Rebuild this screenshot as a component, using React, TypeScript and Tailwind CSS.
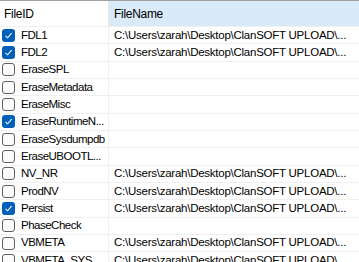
import React from 'react'

const PATH = 'C:\\Users\\zarah\\Desktop\\ClanSOFT UPLOAD\\...'

const rows = [
  { id: 'FDL1', checked: true, file: PATH },
  { id: 'FDL2', checked: true, file: PATH },
  { id: 'EraseSPL', checked: false, file: '' },
  { id: 'EraseMetadata', checked: false, file: '' },
  { id: 'EraseMisc', checked: false, file: '' },
  { id: 'EraseRuntimeN...', checked: true, file: '' },
  { id: 'EraseSysdumpdb', checked: false, file: '' },
  { id: 'EraseUBOOTL...', checked: false, file: '' },
  { id: 'NV_NR', checked: false, file: PATH },
  { id: 'ProdNV', checked: false, file: PATH },
  { id: 'Persist', checked: true, file: PATH },
  { id: 'PhaseCheck', checked: false, file: '' },
  { id: 'VBMETA', checked: false, file: PATH },
  { id: 'VBMETA_SYS...', checked: false, file: PATH },
]

function CheckBox({ checked }: { checked: boolean }) {
  if (checked) {
    return (
      <div className="w-[13px] h-[13px] rounded-[3px] bg-[#005fb8] flex items-center justify-center shrink-0">
        <svg width="9" height="9" viewBox="0 0 9 9" fill="none">
          <path d="M1.5 4.8 L3.6 6.8 L7.6 2.2" stroke="white" strokeWidth="1.1" />
        </svg>
      </div>
    )
  }
  return <div className="w-[13px] h-[13px] rounded-[3px] border border-[#5f5f5f] bg-[#fbfbfb] shrink-0" />
}

export default function App() {
  return (
    <div
      className="w-[359px] h-[262px] overflow-hidden bg-white border-t border-[#a0a0a0] text-black"
      style={{ fontFamily: '"Liberation Sans", Arial, sans-serif' }}
    >
      <div className="flex h-[26px] border-b border-[#f0f0f0]">
        <div className="w-[109px] shrink-0 border-r border-[#e5e5e5] flex items-center pl-[4px] text-[12px] tracking-[-0.3px]">
          FileID
        </div>
        <div className="flex-1 bg-[#d9ebf9] flex items-center pl-[5px] text-[12px] tracking-[-0.3px]">
          FileName
        </div>
      </div>
      {rows.map((r) => (
        <div key={r.id} className="flex h-[17.33px] border-b border-[#f0f0f0] box-border">
          <div className="w-[109px] shrink-0 border-r border-[#f0f0f0] flex items-center pl-[2px] gap-[6px] text-[11.5px] tracking-[-0.5px] whitespace-nowrap overflow-hidden">
            <CheckBox checked={r.checked} />
            <span>{r.id}</span>
          </div>
          <div className="flex-1 flex items-center pl-[5px] text-[11.5px] tracking-[-0.25px] whitespace-nowrap overflow-hidden">
            {r.file}
          </div>
        </div>
      ))}
    </div>
  )
}
